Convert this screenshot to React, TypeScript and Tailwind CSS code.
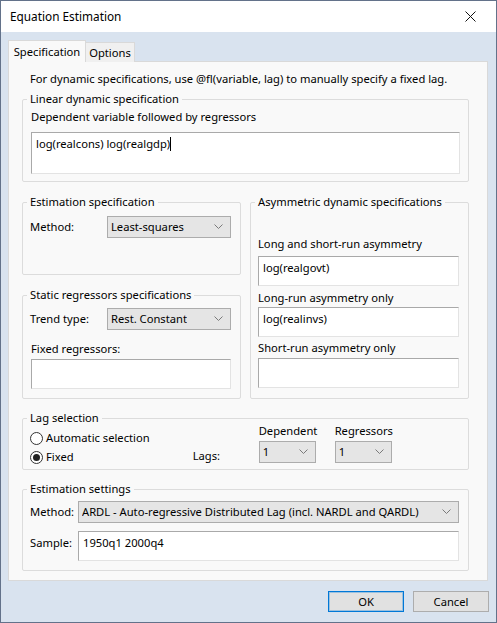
import React from "react";

// Group box with caption sitting on the top border
function GroupBox({
  title,
  className = "",
  bodyClassName = "",
  children,
}: {
  title: string;
  className?: string;
  bodyClassName?: string;
  children: React.ReactNode;
}) {
  return (
    <fieldset className={`border border-[#dcdcdc] rounded-[2px] ${className}`}>
      <legend className="ml-[4px] px-[3px] h-[16px] leading-[16px]">{title}</legend>
      <div className={bodyClassName}>{children}</div>
    </fieldset>
  );
}

function Chevron() {
  return (
    <svg width="9" height="6" viewBox="0 0 9 6" className="shrink-0">
      <path d="M0.5 0.5 L4.5 4.5 L8.5 0.5" fill="none" stroke="#7a7a7a" strokeWidth="1" />
    </svg>
  );
}

function Select({ value, className = "" }: { value: string; className?: string }) {
  return (
    <div
      className={`h-[22px] flex items-center justify-between bg-[#e5e5e5] border border-[#acacac] pl-[3px] pr-[7px] ${className}`}
    >
      <span className="truncate">{value}</span>
      <Chevron />
    </div>
  );
}

function TextBox({ value = "", className = "", caret = false }: { value?: string; className?: string; caret?: boolean }) {
  return (
    <div
      className={`bg-white border-t border-l border-[#a9a9a9] border-r-[#e3e3e3] border-b-[#e3e3e3] border-r border-b pl-[4px] pt-[3px] leading-[16px] ${className}`}
    >
      {value}
      {caret && <span className="inline-block w-px h-[14px] bg-black align-middle -mt-[2px]" />}
    </div>
  );
}

function Radio({ label, checked }: { label: string; checked?: boolean }) {
  return (
    <div className="flex items-center gap-[3px] h-[16px]">
      <span className="w-[13px] h-[13px] rounded-full border border-[#333] bg-white flex items-center justify-center">
        {checked && <span className="w-[7px] h-[7px] rounded-full bg-[#222]" />}
      </span>
      <span>{label}</span>
    </div>
  );
}

export default function App() {
  return (
    <div className="w-[497px] h-[623px] border border-[#63728a] bg-[#d9e3ef] flex flex-col font-['Segoe_UI','Noto_Sans',sans-serif] text-[11.2px] leading-[16px] text-black">
      {/* Title bar */}
      <div className="h-[31px] shrink-0 bg-white flex items-center justify-between pl-[9px] pr-[20px]">
        <span className="text-[11.8px] -mt-[1px]">Equation Estimation</span>
        <svg width="11" height="11" viewBox="0 0 11 11">
          <path d="M0.5 0.5 L10.5 10.5 M10.5 0.5 L0.5 10.5" stroke="#111" strokeWidth="1" />
        </svg>
      </div>

      {/* Tabs */}
      <div className="px-[7px] pt-[8px]">
        <div className="flex items-end h-[22px] relative z-10">
          <div className="h-[22px] w-[78px] bg-[#f9f9f9] border border-[#d9d9d9] border-b-0 flex items-center justify-center">
            Specification
          </div>
          <div className="h-[20px] w-[49px] bg-[#f0f0f0] border border-[#d9d9d9] border-l-0 border-b-0 flex items-center justify-center">
            Options
          </div>
        </div>

        {/* Panel */}
        <div className="h-[520px] w-[480px] -mt-px bg-[#f9f9f9] border border-[#d9d9d9] pl-[13px] pr-[18px] flex flex-col">
          <div className="mt-[9px] pl-[8px] whitespace-nowrap">
            For dynamic specifications, use @fl(variable, lag) to manually specify a fixed lag.
          </div>

          <GroupBox title="Linear dynamic specification" className="mt-[4px]" bodyClassName="px-[8px] pb-[7px]">
            <div className="mt-[2px] pl-[-1px]">Dependent variable followed by regressors</div>
            <TextBox value="log(realcons) log(realgdp)" caret className="mt-[7px] h-[42px]" />
          </GroupBox>

          <div className="mt-[12px] flex gap-[9px]">
            <div className="w-[219px] flex flex-col">
              <GroupBox title="Estimation specification" className="h-[81px]" bodyClassName="pl-[7px] pr-[9px]">
                <div className="mt-[6px] flex items-center">
                  <span className="w-[77px]">Method:</span>
                  <Select value="Least-squares" className="w-[124px]" />
                </div>
              </GroupBox>
              <GroupBox title="Static regressors specifications" className="mt-[12px]" bodyClassName="pl-[7px] pr-[9px] pb-[9px]">
                <div className="mt-[5px] flex items-center">
                  <span className="w-[77px]">Trend type:</span>
                  <Select value="Rest. Constant" className="w-[124px]" />
                </div>
                <div className="mt-[11px] pl-px">Fixed regressors:</div>
                <TextBox className="mt-[2px] h-[30px] ml-px" />
              </GroupBox>
            </div>

            <GroupBox title="Asymmetric dynamic specifications" className="w-[220px]" bodyClassName="pl-[7px] pr-[9px]">
              <div className="mt-[26px]">Long and short-run asymmetry</div>
              <TextBox value="log(realgovt)" className="mt-[4px] h-[30px]" />
              <div className="mt-[4px]">Long-run asymmetry only</div>
              <TextBox value="log(realinvs)" className="mt-[1px] h-[30px]" />
              <div className="mt-[3px]">Short-run asymmetry only</div>
              <TextBox className="mt-[2px] h-[30px]" />
            </GroupBox>
          </div>

          <GroupBox title="Lag selection" className="mt-[11px]" bodyClassName="pl-[7px] pb-[4px]">
            <div className="flex">
              <div className="flex flex-col">
                <div className="mt-[4px]">
                  <Radio label="Automatic selection" />
                </div>
                <div className="mt-[3px]">
                  <Radio label="Fixed" checked />
                </div>
              </div>
              <div className="ml-[43px] flex items-end pb-[1px]">
                <span className="w-[66px]">Lags:</span>
              </div>
              <div className="-mt-[3px] flex flex-col w-[57px]">
                <span>Dependent</span>
                <Select value="1" className="mt-[2px] h-[22px]" />
              </div>
              <div className="-mt-[3px] ml-[19px] flex flex-col w-[57px]">
                <span>Regressors</span>
                <Select value="1" className="mt-[2px] h-[22px]" />
              </div>
            </div>
          </GroupBox>

          <GroupBox title="Estimation settings" className="mt-[11px]" bodyClassName="pl-[7px] pr-[9px] pb-[9px]">
            <div className="mt-[4px] flex items-center">
              <span className="w-[48px]">Method:</span>
              <Select value="ARDL - Auto-regressive Distributed Lag (incl. NARDL and QARDL)" className="flex-1" />
            </div>
            <div className="mt-[8px] flex items-start">
              <span className="w-[48px] mt-[4px]">Sample:</span>
              <TextBox value="1950q1 2000q4" className="flex-1 h-[30px] pt-[3px]" />
            </div>
          </GroupBox>
        </div>
      </div>

      {/* Buttons */}
      <div className="mt-[10px] flex justify-end gap-[9px] pr-[7px]">
        <button type="button" className="w-[76px] h-[21px] bg-[#e1e1e1] border border-[#0078d7] outline outline-1 -outline-offset-2 outline-[#0078d7]/30">
          OK
        </button>
        <button type="button" className="w-[76px] h-[21px] bg-[#e1e1e1] border border-[#adadad]">
          Cancel
        </button>
      </div>
    </div>
  );
}
